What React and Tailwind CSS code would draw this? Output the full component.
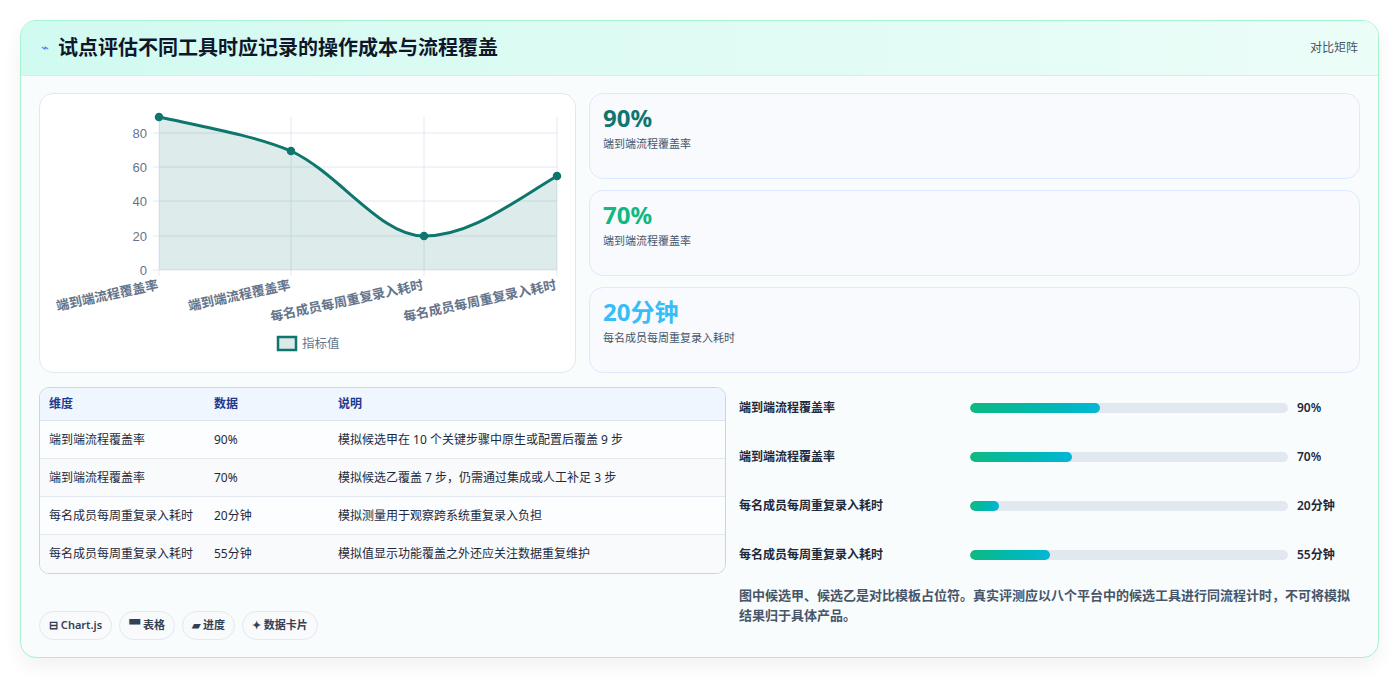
const F = { fontFamily: '"Noto Sans","Noto Sans CJK SC",sans-serif' };

function Chart() {
  const pts = [[119, 23], [251, 57], [384, 142], [517, 82]];
  const ys = [[0, 176], [20, 142], [40, 107], [60, 73], [80, 39]];
  const line = "M119,23 C170,34 215,42 251,57 C300,80 340,142 384,142 C430,142 470,110 517,82";
  const labels = ["端到端流程覆盖率", "端到端流程覆盖率", "每名成员每周重复录入耗时", "每名成员每周重复录入耗时"];
  return (
    <svg width="536" height="279" className="block">
      {ys.map(([v, y]) => (
        <g key={v}>
          <line x1="113" x2="517" y1={y} y2={y} stroke="#e2e8f0" />
          <text x="107" y={y + 5} textAnchor="end" fontSize="13" fill="#64748b" fontFamily="Liberation Sans, sans-serif">{v}</text>
        </g>
      ))}
      {pts.map(([x], i) => (
        <line key={i} x1={x} x2={x} y1="23" y2="182" stroke="#e2e8f0" />
      ))}
      <path d={line + " L517,176 L119,176 Z"} fill="#0f766e" fillOpacity="0.14" />
      <path d={line} fill="none" stroke="#0f766e" strokeWidth="3" />
      {pts.map(([x, y], i) => (
        <circle key={i} cx={x} cy={y} r="3.5" fill="#0f766e" stroke="#0f766e" strokeWidth="1.5" />
      ))}
      {labels.map((l, i) => (
        <text key={i} transform={`translate(${pts[i][0]},${195}) rotate(-12)`} textAnchor="end" fontSize="13" fontWeight="600" fill="#64748b" fontFamily="Noto Sans CJK SC, sans-serif">{l}</text>
      ))}
      <rect x="238" y="243" width="18" height="13" fill="#dbe9e7" stroke="#0f766e" strokeWidth="2.5" />
      <text x="262" y="254" fontSize="12.5" fill="#64748b" fontFamily="Noto Sans CJK SC, sans-serif">指标值</text>
    </svg>
  );
}

const stats = [
  ["90%", "text-[#0f766e]"],
  ["70%", "text-[#10b981]"],
  ["20分钟", "text-[#38bdf8]"],
];
const statLabels = ["端到端流程覆盖率", "端到端流程覆盖率", "每名成员每周重复录入耗时"];
const rows = [
  ["端到端流程覆盖率", "90%", "模拟候选甲在 10 个关键步骤中原生或配置后覆盖 9 步"],
  ["端到端流程覆盖率", "70%", "模拟候选乙覆盖 7 步，仍需通过集成或人工补足 3 步"],
  ["每名成员每周重复录入耗时", "20分钟", "模拟测量用于观察跨系统重复录入负担"],
  ["每名成员每周重复录入耗时", "55分钟", "模拟值显示功能覆盖之外还应关注数据重复维护"],
];
const bars = [
  ["端到端流程覆盖率", 41, "90%"],
  ["端到端流程覆盖率", 32, "70%"],
  ["每名成员每周重复录入耗时", 9, "20分钟"],
  ["每名成员每周重复录入耗时", 25, "55分钟"],
];

export default function App() {
  return (
    <div style={F} className="w-[1399px] h-[678px] bg-white pt-[20px] pl-[20px]">
      <div className="w-[1359px] h-[638px] rounded-[16px] border border-[#a7f3d0] bg-[#f8fcfd] shadow-[0_8px_20px_rgba(0,0,0,0.06)] overflow-hidden">
        <div className="h-[55px] flex items-center justify-between px-[20px] bg-gradient-to-r from-[#d1faf0] to-[#ecfdf8] border-b border-[#d5efe9]">
          <div className="flex items-center gap-[9px]">
            <span className="text-[#3b82f6] text-[13px]">⌁</span>
            <span className="text-[20px] font-bold text-[#0f172a]">试点评估不同工具时应记录的操作成本与流程覆盖</span>
          </div>
          <span className="text-[12px] text-[#475569]">对比矩阵</span>
        </div>
        <div className="px-[18px] pt-[17px]">
          <div className="flex gap-[13px]">
            <div className="w-[537px] h-[280px] rounded-[14px] border border-[#e2e8f0] bg-white overflow-hidden">
              <Chart />
            </div>
            <div className="flex-1 flex flex-col gap-[11px]">
              {stats.map(([v, c], i) => (
                <div key={i} className="h-[86px] rounded-[14px] border border-[#dbeafe] bg-[#f8fafe] px-[13px] pt-[8px]">
                  <div className={`text-[24px] font-bold leading-[32px] ${c}`}>{v}</div>
                  <div className="text-[11px] text-[#475569] mt-[2px]">{statLabels[i]}</div>
                </div>
              ))}
            </div>
          </div>
          <div className="flex gap-[13px] mt-[14px]">
            <div className="w-[687px]">
              <div className="rounded-[10px] border border-[#cbd5e1] overflow-hidden bg-white">
                <div className="flex h-[33px] items-center bg-[#eff6ff] border-b border-[#dbe2ea] text-[12px] font-semibold text-[#1e3a8a]">
                  <div className="w-[174px] pl-[9px]">维度</div>
                  <div className="w-[124px]">数据</div>
                  <div>说明</div>
                </div>
                {rows.map((r, i) => (
                  <div key={i} className={`flex h-[38px] items-center text-[12px] text-[#1e293b] ${i < 3 ? "border-b border-[#e2e8f0]" : ""} ${i % 2 ? "bg-[#f8fafc]" : "bg-[#fbfdfe]"}`}>
                    <div className="w-[174px] pl-[9px]">{r[0]}</div>
                    <div className="w-[124px]">{r[1]}</div>
                    <div>{r[2]}</div>
                  </div>
                ))}
              </div>
              <div className="flex gap-[7px] mt-[37px]">
                {["⊟ Chart.js", "▀ 表格", "▰ 进度", "✦ 数据卡片"].map((t) => (
                  <span key={t} className="h-[29px] px-[9px] flex items-center rounded-full border border-[#e2e8f0] bg-[#f8fafc] text-[11px] font-semibold text-[#334155]">{t}</span>
                ))}
              </div>
            </div>
            <div className="flex-1 pr-[8px] -mt-[4px]">
              {bars.map(([l, w, v], i) => (
                <div key={i} className="flex items-center h-[49px] text-[12px] font-semibold text-[#1e293b]">
                  <div className="w-[231px]">{l}</div>
                  <div className="w-[318px] h-[10px] rounded-full bg-[#e2e8f0] overflow-hidden">
                    <div className="h-full rounded-full bg-gradient-to-r from-[#10b981] to-[#06b6d4]" style={{ width: w + "%" }} />
                  </div>
                  <div className="ml-[9px]">{v}</div>
                </div>
              ))}
              <p className="mt-[6px] text-[13px] leading-[20px] font-semibold text-[#475569]">图中候选甲、候选乙是对比模板占位符。真实评测应以八个平台中的候选工具进行同流程计时，不可将模拟结果归于具体产品。</p>
            </div>
          </div>
        </div>
      </div>
    </div>
  );
}
